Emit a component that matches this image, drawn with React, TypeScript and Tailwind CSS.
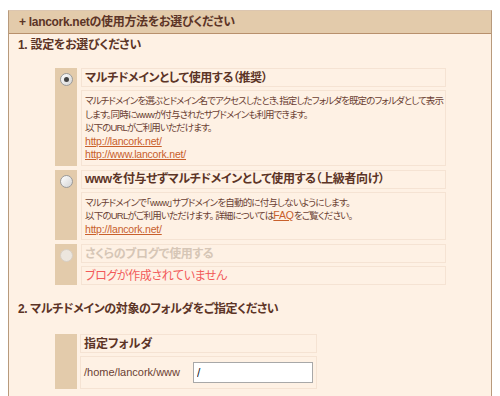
import React from 'react';

const font = { fontFamily: '"Liberation Sans", "Noto Sans CJK JP", sans-serif', fontFeatureSettings: '"palt"' };

const Radio: React.FC<{ checked?: boolean; disabled?: boolean }> = ({ checked, disabled }) => (
  <span
    className={`mt-[4px] flex h-[13px] w-[13px] items-center justify-center rounded-full border ${
      disabled ? 'border-[#d8cfc4] bg-[#ece6de]' : 'border-[#9a9a9a] bg-gradient-to-br from-[#ffffff] to-[#d4d4d4]'
    }`}
  >
    {checked && <span className="h-[5px] w-[5px] rounded-full bg-[#444]" />}
  </span>
);

const Box: React.FC<{ className?: string; children: React.ReactNode }> = ({ className = '', children }) => (
  <div className={`overflow-hidden border border-[#f5e3d3] px-[3px] ${className}`}>{children}</div>
);

const Link: React.FC<{ children: React.ReactNode }> = ({ children }) => (
  <a className="text-[10.5px] tracking-[-0.2px] text-[#c8602c] underline">{children}</a>
);

const Option: React.FC<{ radio: React.ReactNode; children: React.ReactNode }> = ({ radio, children }) => (
  <div className="flex gap-[4px]">
    <div className="flex w-[22px] shrink-0 justify-center bg-[#e3cbab] pt-[1px]">{radio}</div>
    <div className="flex min-w-0 flex-1 flex-col gap-[3px]">{children}</div>
  </div>
);

export default function App() {
  return (
    <div className="h-[396px] w-[500px] overflow-hidden bg-white pt-[10px]" style={font}>
      <div className="mx-[8px] h-[400px] border-x border-t border-x-[#b89a7c] border-t-[#dcc6b0] bg-[#fef1e4]">
        <div className="flex h-[23px] items-center border-b border-[#b8906c] bg-[#e3cbab] px-[10px] text-[12px] font-bold tracking-[-0.3px] text-[#5c3426]">
          + lancork.netの使用方法をお選びください
        </div>

        <div className="px-[9px] pt-[2px] text-[12px] font-bold leading-[18px] tracking-[-0.3px] text-[#5c3426]">1. 設定をお選びください</div>

        <div className="ml-[46px] mr-[45px] mt-[14px] flex flex-col gap-[4px] text-[#6b3f33]">
          <Option radio={<Radio checked />}>
            <Box className="flex h-[19px] items-center text-[12px] font-bold tracking-[-0.4px] text-[#5c3426]">マルチドメインとして使用する（推奨）</Box>
            <Box className="whitespace-nowrap py-[3px] text-[9.5px] leading-[13.5px] tracking-[-0.9px]">
              マルチドメインを選ぶとドメイン名でアクセスしたとき、指定したフォルダを既定のフォルダとして表示
              <br />
              します。同時にwwwが付与されたサブドメインも利用できます。
              <br />
              以下のURLがご利用いただけます。
              <br />
              <Link>http://lancork.net/</Link>
              <br />
              <Link>http://www.lancork.net/</Link>
            </Box>
          </Option>

          <Option radio={<Radio />}>
            <Box className="flex h-[19px] items-center text-[12px] font-bold tracking-[-0.4px] text-[#5c3426]">wwwを付与せずマルチドメインとして使用する（上級者向け）</Box>
            <Box className="whitespace-nowrap py-[3px] text-[9.5px] leading-[13.5px] tracking-[-0.8px]">
              マルチドメインで「www」サブドメインを自動的に付与しないようにします。
              <br />
              以下のURLがご利用いただけます。 詳細については<Link>FAQ</Link>をご覧ください。
              <br />
              <Link>http://lancork.net/</Link>
            </Box>
          </Option>

          <Option radio={<Radio disabled />}>
            <Box className="flex h-[19px] items-center text-[12px] font-bold tracking-[-0.4px] text-[#d6c6b6]">さくらのブログで使用する</Box>
            <Box className="flex h-[19px] items-center text-[12px] tracking-[-0.4px] text-[#f25a5a]">ブログが作成されていません</Box>
          </Option>
        </div>

        <div className="mt-[15px] px-[9px] text-[12px] font-bold leading-[18px] tracking-[-0.4px] text-[#5c3426]">
          2. マルチドメインの対象のフォルダをご指定ください
        </div>

        <div className="ml-[46px] mt-[16px] flex w-[262px] gap-[3px]">
          <div className="w-[22px] shrink-0 bg-[#e3cbab]" />
          <div className="flex min-w-0 flex-1 flex-col gap-[3px]">
            <Box className="flex h-[19px] items-center text-[12px] font-bold text-[#5c3426]">指定フォルダ</Box>
            <Box className="flex h-[33px] items-center gap-[4px] text-[11px] text-[#6b3f33]">
              <span className="w-[106px]">/home/lancork/www</span>
              <input
                defaultValue="/"
                className="h-[21px] w-[120px] border border-[#a8a8a8] bg-white px-[3px] text-[12px] text-[#222] outline-none"
              />
            </Box>
          </div>
        </div>
      </div>
    </div>
  );
}
